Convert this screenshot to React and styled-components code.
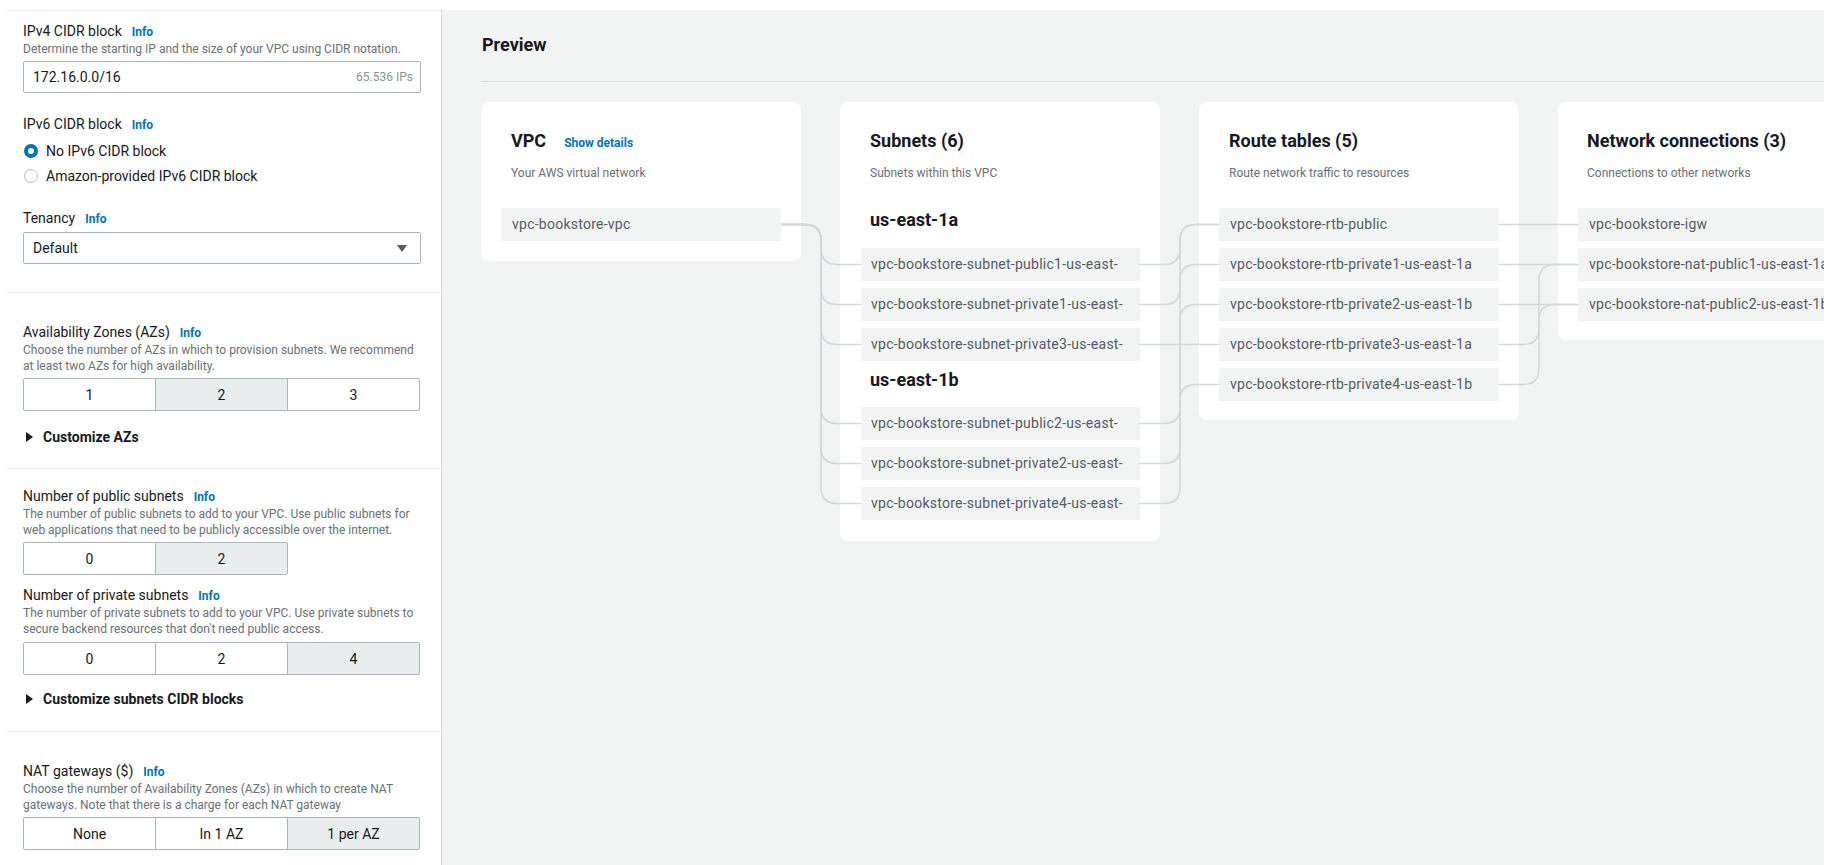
import React from 'react';
import styled, { createGlobalStyle } from 'styled-components';

const GlobalStyle = createGlobalStyle`
  body {
    margin: 0;
    font-family: Roboto, "Liberation Sans", sans-serif;
    color: #16191f;
    background: #fff;
  }
`

const Page = styled.div`
  display: flex;
  height: 865px;
  padding-top: 10px;
  box-sizing: border-box;
  overflow: hidden;
  background: #fff;
`

const Sidebar = styled.div`
  width: 442px;
  flex-shrink: 0;
  padding-left: 7px;
  box-sizing: border-box;
  border-right: 1px solid #d5dbdb;
`

const Section = styled.div`
  border-top: 1px solid #eaeded;
  padding: ${p => p.$top}px 20px ${p => p.$bottom || 0}px 16px;
`

const Label = styled.div`
  display: flex;
  align-items: center;
  gap: 10px;
  height: 20px;
  font-size: 14px;
  line-height: 20px;
  margin-top: ${p => p.$mt || 0}px;
`

const Info = styled.span`
  font-size: 12px;
  line-height: 20px;
  font-weight: 700;
  color: #0073bb;
  padding-top: 1px;
`

const Desc = styled.div`
  font-size: 12px;
  line-height: 16px;
  color: #687078;
`

const Input = styled.div`
  margin-top: 4px;
  height: 32px;
  box-sizing: border-box;
  border: 1px solid #aab7b8;
  border-radius: 2px;
  display: flex;
  align-items: center;
  justify-content: space-between;
  padding: 0 7px 0 9px;
  font-size: 14px;
`

const Hint = styled.span`
  font-size: 12px;
  color: #879596;
`

const Arrow = styled.span`
  width: 0;
  height: 0;
  margin-right: 6px;
  border-left: 5px solid transparent;
  border-right: 5px solid transparent;
  border-top: 7px solid #545b64;
`

const Radios = styled.div`
  margin-top: 4px;
`

const RadioRow = styled.div`
  display: flex;
  align-items: center;
  height: 25px;
  gap: 8px;
  font-size: 14px;
`

const Dot = styled.span`
  width: 14px;
  height: 14px;
  margin-left: 1px;
  box-sizing: border-box;
  border-radius: 50%;
  background: #fff;
  border: ${p => (p.$on ? '4px solid #0073bb' : '1.5px solid #bcc3c7')};
`

const Segments = styled.div`
  display: flex;
  margin-top: ${p => p.$mt || 4}px;
`

const Segment = styled.div`
  width: 133px;
  height: 33px;
  box-sizing: border-box;
  border: 1px solid #aab7b8;
  margin-left: -1px;
  &:first-child { margin-left: 0; border-radius: 2px 0 0 2px; }
  &:last-child { border-radius: 0 2px 2px 0; }
  display: flex;
  align-items: center;
  justify-content: center;
  font-size: 14px;
  color: #16191f;
  background: ${p => (p.$on ? '#eaeded' : '#fff')};
`

const Expander = styled.div`
  display: flex;
  align-items: center;
  gap: 10px;
  height: 20px;
  margin-top: ${p => p.$mt}px;
  padding-left: 3px;
  font-size: 14px;
  line-height: 20px;
  font-weight: 700;
`

const Caret = styled.span`
  width: 0;
  height: 0;
  border-top: 5px solid transparent;
  border-bottom: 5px solid transparent;
  border-left: 7px solid #16191f;
`

const Main = styled.div`
  flex: 1;
  min-width: 0;
  margin-right: 2px;
  background: #f2f3f3;
  overflow: hidden;
  padding: 23px 0 0 39px;
`

const Heading = styled.div`
  font-size: 18px;
  line-height: 24px;
  font-weight: 700;
  padding: 0 0 24px 1px;
  border-bottom: 1px solid #d5dbdb;
`

const CardsRow = styled.div`
  position: relative;
  display: flex;
  align-items: flex-start;
  gap: 39px;
  margin-top: 20px;
`

const Card = styled.div`
  flex-shrink: 0;
  width: 320px;
  background: #fff;
  border-radius: 8px;
  box-sizing: border-box;
  padding: 27px 20px ${p => p.$bottom}px ${p => p.$inset || 20}px;
`

const CardHead = styled.div`
  display: flex;
  align-items: baseline;
  gap: 18px;
  padding-left: ${p => p.$pad}px;
`

const CardTitle = styled.div`
  font-size: 18px;
  line-height: 24px;
  font-weight: 700;
`

const ShowDetails = styled.span`
  font-size: 12px;
  font-weight: 700;
  color: #0073bb;
`

const CardDesc = styled.div`
  margin-top: 12px;
  padding-left: ${p => p.$pad}px;
  font-size: 12px;
  line-height: 16px;
  color: #687078;
`

const Zone = styled.div`
  margin-top: ${p => p.$mt}px;
  padding-left: ${p => p.$pad}px;
  font-size: 18px;
  line-height: 24px;
  font-weight: 700;
`

const Items = styled.div`
  display: flex;
  flex-direction: column;
  gap: 7px;
  margin-top: ${p => p.$mt}px;
`

const Item = styled.div`
  height: 33px;
  line-height: 33px;
  padding-left: ${p => p.$pad}px;
  background: #f2f3f3;
  color: #545b64;
  font-size: 14px;
  letter-spacing: 0.25px;
  white-space: nowrap;
  overflow: hidden;
`

const Wires = styled.svg`
  position: absolute;
  left: 0;
  top: 0;
  width: 1400px;
  height: 460px;
  overflow: visible;
  pointer-events: none;
`

function linkPath(x1, y1, xm, x2, y2, r = 16) {
  if (y1 === y2) return `M${x1} ${y1}H${x2}`
  const d = y2 > y1 ? 1 : -1
  const rr = Math.min(r, Math.abs(y2 - y1) / 2)
  return `M${x1} ${y1}H${xm - rr}Q${xm} ${y1} ${xm} ${y1 + d * rr}V${y2 - d * rr}Q${xm} ${y2} ${xm + rr} ${y2}H${x2}`
}

// y centres of diagram rows, relative to the cards row
const vpcY = 122.5
const subnetY = [162.5, 202.5, 242.5, 321.5, 361.5, 401.5]
const routeY = [122.5, 162.5, 202.5, 242.5, 282.5]
const netY = [122.5, 162.5, 202.5]

const subnetToRoute = [0, 1, 3, 0, 2, 4]
const routeToNet = [0, 1, 2, 1, 2]

function Connectors() {
  const paths = []
  subnetY.forEach(y => paths.push(linkPath(300, vpcY, 340, 380, y)))
  subnetY.forEach((y, i) => paths.push(linkPath(658, y, 699, 738, routeY[subnetToRoute[i]])))
  routeY.forEach((y, i) => paths.push(linkPath(1018, y, 1058, 1097, netY[routeToNet[i]])))
  return (
    <Wires>
      {paths.map((d, i) => (
        <path key={i} d={d} fill="none" stroke="#d3d8da" strokeWidth="1.5" />
      ))}
    </Wires>
  )
}

function Field({ label, mt }) {
  return (
    <Label $mt={mt}>
      {label}
      <Info>Info</Info>
    </Label>
  )
}

function Picker({ options, selected, mt }) {
  return (
    <Segments $mt={mt}>
      {options.map(o => (
        <Segment key={o} $on={o === selected}>{o}</Segment>
      ))}
    </Segments>
  )
}

function Settings() {
  return (
    <Sidebar>
      <Section $top={10} $bottom={28}>
        <Field label="IPv4 CIDR block" />
        <Desc>Determine the starting IP and the size of your VPC using CIDR notation.</Desc>
        <Input>
          172.16.0.0/16
          <Hint>65.536 IPs</Hint>
        </Input>
        <Field label="IPv6 CIDR block" mt={21} />
        <Radios>
          <RadioRow><Dot $on />No IPv6 CIDR block</RadioRow>
          <RadioRow><Dot />Amazon-provided IPv6 CIDR block</RadioRow>
        </Radios>
        <Field label="Tenancy" mt={20} />
        <Input>
          Default
          <Arrow />
        </Input>
      </Section>
      <Section $top={29} $bottom={21}>
        <Field label="Availability Zones (AZs)" />
        <Desc>Choose the number of AZs in which to provision subnets. We recommend at least two AZs for high availability.</Desc>
        <Picker options={['1', '2', '3']} selected="2" />
        <Expander $mt={16}><Caret />Customize AZs</Expander>
      </Section>
      <Section $top={17} $bottom={22}>
        <Field label="Number of public subnets" />
        <Desc>The number of public subnets to add to your VPC. Use public subnets for web applications that need to be publicly accessible over the internet.</Desc>
        <Picker options={['0', '2']} selected="2" />
        <Field label="Number of private subnets" mt={10} />
        <Desc>The number of private subnets to add to your VPC. Use private subnets to secure backend resources that don't need public access.</Desc>
        <Picker options={['0', '2', '4']} selected="4" mt={5} />
        <Expander $mt={14}><Caret />Customize subnets CIDR blocks</Expander>
      </Section>
      <Section $top={29}>
        <Field label="NAT gateways ($)" />
        <Desc>Choose the number of Availability Zones (AZs) in which to create NAT gateways. Note that there is a charge for each NAT gateway</Desc>
        <Picker options={['None', 'In 1 AZ', '1 per AZ']} selected="1 per AZ" />
      </Section>
    </Sidebar>
  )
}

function ItemList({ items, mt = 27, pad = 11 }) {
  return (
    <Items $mt={mt}>
      {items.map(t => (
        <Item key={t} $pad={pad}>{t}</Item>
      ))}
    </Items>
  )
}

function Preview() {
  return (
    <Main>
      <Heading>Preview</Heading>
      <CardsRow>
        <Card $bottom={20}>
          <CardHead $pad={10}>
            <CardTitle>VPC</CardTitle>
            <ShowDetails>Show details</ShowDetails>
          </CardHead>
          <CardDesc $pad={10}>Your AWS virtual network</CardDesc>
          <ItemList items={['vpc-bookstore-vpc']} />
        </Card>

        <Card $inset={21} $bottom={21}>
          <CardHead $pad={9}>
            <CardTitle>Subnets (6)</CardTitle>
          </CardHead>
          <CardDesc $pad={9}>Subnets within this VPC</CardDesc>
          <Zone $mt={27} $pad={9}>us-east-1a</Zone>
          <ItemList
            mt={16}
            pad={10}
            items={[
              'vpc-bookstore-subnet-public1-us-east-',
              'vpc-bookstore-subnet-private1-us-east-',
              'vpc-bookstore-subnet-private3-us-east-',
            ]}
          />
          <Zone $mt={7} $pad={9}>us-east-1b</Zone>
          <ItemList
            mt={15}
            pad={10}
            items={[
              'vpc-bookstore-subnet-public2-us-east-',
              'vpc-bookstore-subnet-private2-us-east-',
              'vpc-bookstore-subnet-private4-us-east-',
            ]}
          />
        </Card>

        <Card $bottom={19}>
          <CardHead $pad={10}>
            <CardTitle>Route tables (5)</CardTitle>
          </CardHead>
          <CardDesc $pad={10}>Route network traffic to resources</CardDesc>
          <ItemList
            items={[
              'vpc-bookstore-rtb-public',
              'vpc-bookstore-rtb-private1-us-east-1a',
              'vpc-bookstore-rtb-private2-us-east-1b',
              'vpc-bookstore-rtb-private3-us-east-1a',
              'vpc-bookstore-rtb-private4-us-east-1b',
            ]}
          />
        </Card>

        <Card $bottom={19}>
          <CardHead $pad={9}>
            <CardTitle>Network connections (3)</CardTitle>
          </CardHead>
          <CardDesc $pad={9}>Connections to other networks</CardDesc>
          <ItemList
            items={[
              'vpc-bookstore-igw',
              'vpc-bookstore-nat-public1-us-east-1a',
              'vpc-bookstore-nat-public2-us-east-1b',
            ]}
          />
        </Card>

        <Connectors />
      </CardsRow>
    </Main>
  )
}

export default function App() {
  return (
    <>
      <GlobalStyle />
      <Page>
        <Settings />
        <Preview />
      </Page>
    </>
  )
}
